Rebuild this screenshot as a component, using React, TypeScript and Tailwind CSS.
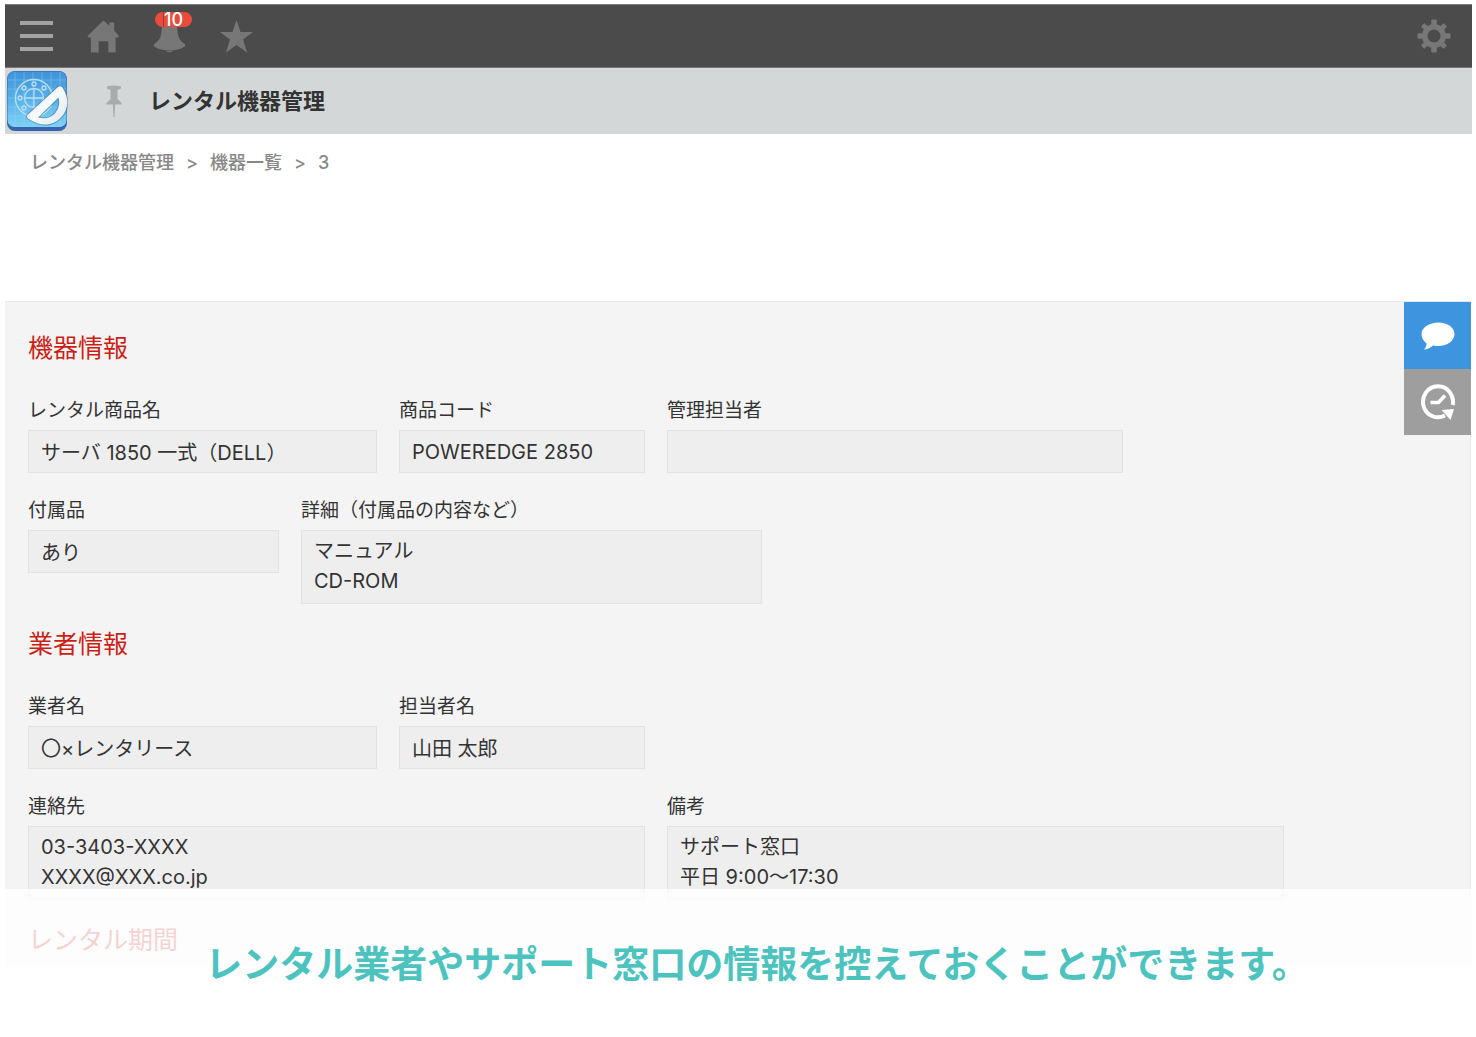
import type { ReactNode } from "react";

type FieldProps = {
  id: string;
  label: string;
  value: string;
  width: string;
  rows?: number;
};

const boxStyle =
  "block w-full border border-[#e3e3e3] bg-[#eeeeee] px-3 text-[20px] text-[#333333] outline-none";

function Field({ id, label, value, width, rows }: FieldProps) {
  return (
    <div className={`${width} shrink`}>
      <label htmlFor={id} className="mb-1 block text-[19px] leading-[30px] whitespace-nowrap text-[#333333]">
        {label}
      </label>
      {rows ? (
        <textarea id={id} rows={rows} readOnly value={value} className={`${boxStyle} resize-none overflow-hidden pt-[5px] pb-[7px] leading-[30px]`} />
      ) : (
        <input id={id} type="text" readOnly value={value} className={`${boxStyle} h-[43px]`} />
      )}
    </div>
  );
}

function Row({ children }: { children: ReactNode }) {
  return <div className="flex items-start gap-[22px]">{children}</div>;
}

function SectionTitle({ children }: { children: ReactNode }) {
  return <h2 className="text-[25px] leading-9 text-[#cc1f14]">{children}</h2>;
}

function AppIcon() {
  return (
    <svg viewBox="0 0 62 62" className="size-[62px]" aria-hidden="true">
      <defs>
        <linearGradient id="tile" x1="0" y1="0" x2="0" y2="1">
          <stop offset="0" stopColor="#3f93d8" />
          <stop offset="0.5" stopColor="#58b0e8" />
          <stop offset="1" stopColor="#7ed2f5" />
        </linearGradient>
        <linearGradient id="ruler" x1="0" y1="0" x2="1" y2="1">
          <stop offset="0" stopColor="#d3dfe8" />
          <stop offset="0.5" stopColor="#f7fbfd" />
          <stop offset="1" stopColor="#dbe6ec" />
        </linearGradient>
      </defs>
      <rect x="1" y="1" width="60" height="60" rx="8" fill="#3763ae" />
      <rect x="1.5" y="1.5" width="59" height="55.500" rx="7" fill="url(#tile)" />
      <path d="M9 2v54M18 2v54M27 2v54M36 2v54M45 2v54M54 2v54M2 10h58M2 19h58M2 28h58M2 37h58M2 46h58" stroke="#9bd5f6" strokeWidth="1" opacity="0.4" />
      <g fill="none" stroke="#b9dff7" strokeWidth="1.3">
        <circle cx="28" cy="28" r="18.500" />
        <circle cx="28" cy="28" r="9.500" />
        <path d="M28 18v20M18 28h20" />
        <circle cx="28" cy="14" r="2" />
        <circle cx="18" cy="18" r="2" />
        <circle cx="14" cy="28" r="2" />
        <circle cx="18" cy="38" r="2" />
        <circle cx="38" cy="18" r="2" />
      </g>
      <path
        d="M21.500 45 52 17q3.500-2 5 1.500c6 9 6 21-2 29-8 8-19 10-32 1.500q-3.500-2-1.500-4zM32 47.500c7 2 13 0 17-4 4-5 5-10 3.500-16z"
        fill="none"
        stroke="#3e6d97"
        strokeWidth="2"
        opacity="0.5"
      />
      <path
        d="M21.500 45 52 17q3.500-2 5 1.500c6 9 6 21-2 29-8 8-19 10-32 1.500q-3.500-2-1.500-4zM32 47.500c7 2 13 0 17-4 4-5 5-10 3.500-16z"
        fill="url(#ruler)"
        fillRule="evenodd"
      />
    </svg>
  );
}

function TopBar() {
  return (
    <header className="flex h-16 items-center justify-between border-y border-[#777777] bg-[#4b4b4b] pr-[21px] pl-[15px] text-[#777777]">
      <nav className="flex items-center gap-[33px]">
        <button type="button" aria-label="メニュー" className="flex w-[34px] flex-col gap-[9px]">
          <span className="block h-1 w-[33px] bg-[#a3a3a3]" />
          <span className="block h-1 w-[33px] bg-[#a3a3a3]" />
          <span className="block h-1 w-[33px] bg-[#a3a3a3]" />
        </button>
        <a href="#home" aria-label="ホーム">
          <svg viewBox="0 0 34 34" className="size-[33px]" fill="currentColor">
            <path d="M17 .5 23 6V2.500h5V11l5 5.500L31.500 18H29.500v15.500h-7.500V22h-10v11.500H4V18H1.500L.5 16.500z" />
          </svg>
        </a>
        <button type="button" aria-label="通知" className="relative">
          <svg viewBox="0 0 34 34" className="size-[33px]" fill="currentColor">
            <path d="M17 0c-5 1-7.500 4-8 9C8.500 17 7 21 1 25v2c4 3 10 4.300 16 4.300S29 30 33 27v-2c-6-4-7.500-8-8-16C24.500 4 22 1 17 0zM13 31h8C20 34 14 34 13 31z" />
          </svg>
          <span className="absolute -top-2 left-[2px] flex h-[15px] w-[37px] items-center justify-center rounded-full bg-[#e74c3c] font-['Inter'] text-[18px] leading-[15px] font-medium text-white">
            <span className="absolute left-2 h-full w-px bg-[#a33a30]" />
            10
          </span>
        </button>
        <a href="#favorites" aria-label="お気に入り">
          <svg viewBox="0 0 34 34" className="size-[34px]" fill="currentColor">
            <path d="M17.500 1l4 12h12.500l-10 7.500L28 33.500 17.500 26 7 33.500l4-13L1 13h12.500z" />
          </svg>
        </a>
      </nav>
      <button type="button" aria-label="設定">
        <svg viewBox="0 0 34 34" className="size-[34px]">
          <g fill="#777777">
            <rect x="14.250" y="0.500" width="5.500" height="33" rx="1" />
            <rect x="14.500" y="1" width="5" height="32" rx="1" transform="rotate(45 17 17)" />
            <rect x="14.250" y="0.500" width="5.500" height="33" rx="1" transform="rotate(90 17 17)" />
            <rect x="14.500" y="1" width="5" height="32" rx="1" transform="rotate(135 17 17)" />
            <circle cx="17" cy="17" r="12" />
          </g>
          <circle cx="17" cy="17" r="6.500" fill="#4b4b4b" />
        </svg>
      </button>
    </header>
  );
}

function TitleBar() {
  return (
    <div className="flex h-[66px] items-center bg-[#d3d7d8] pl-px">
      <AppIcon />
      <svg viewBox="0 0 16 32" className="ml-[38px] h-8 w-4" fill="#a9abac" aria-hidden="true">
        <path d="M1 1.500Q8-.5 15 1.500v2L11.500 5v9l4 4v1.500H9.200L8.500 32h-1L6.800 19.500H.5V18l4-4V5L1 3.500z" />
      </svg>
      <h1 className="ml-[27px] text-[22px] font-bold text-[#333333]">レンタル機器管理</h1>
    </div>
  );
}

function SideTabs() {
  return (
    <aside className="-mr-px flex w-[67px] shrink-0 flex-col">
      <button type="button" aria-label="コメント" className="flex h-[67px] items-center justify-center bg-[#3d95e0]">
        <svg viewBox="0 0 34 28" className="h-7 w-[34px]" fill="#ffffff">
          <path d="M17.500.5C26.500.5 33.500 5.500 33.500 12s-7 12-16 12c-2 0-3.700-.2-5.300-.6C9.500 25.800 6.500 27.300 3 27.500c1.600-1.600 2.500-3.500 2.500-6C2.500 19 .5 15.800.5 12 .5 5.500 8.500.5 17.500.5z" />
        </svg>
      </button>
      <button type="button" aria-label="変更履歴" className="flex h-[66px] items-center justify-center bg-[#9e9e9e]">
        <svg viewBox="0 0 34 36" className="h-9 w-[34px]">
          <path d="M31.700 21A15 15.500 0 1 0 24 31.500" fill="none" stroke="#ffffff" strokeWidth="4" />
          <path d="M20.500 26 33 25 29.500 36z" fill="#ffffff" />
          <path d="M9.500 18.500h8l6.500-7" fill="none" stroke="#ffffff" strokeWidth="3.500" />
        </svg>
      </button>
    </aside>
  );
}

export default function App() {
  return (
    <div className="bg-white pt-1 font-['Inter','Noto_Sans_CJK_JP',sans-serif]">
      <div className="mr-1 ml-[5px]">
        <TopBar />
        <TitleBar />
      </div>

      <nav aria-label="パンくず" className="mt-4 mb-[125px] flex gap-3 pl-[30px] text-[18px] leading-[26px] font-medium text-[#888888]">
        <a href="#app">レンタル機器管理</a>
        <span>&gt;</span>
        <a href="#list">機器一覧</a>
        <span>&gt;</span>
        <span>3</span>
      </nav>

      <main className="mr-[5px] ml-[5px] flex items-start justify-between border-t border-r border-[#e6e9ea] bg-[#f4f4f4]">
        <form className="min-w-0 flex-1 pt-7 pb-[9px] pl-[23px]">
          <section>
            <SectionTitle>機器情報</SectionTitle>
            <div className="mt-[30px] flex flex-col gap-[23px]">
              <Row>
                <Field id="product" label="レンタル商品名" value="サーバ 1850 一式（DELL）" width="w-[349px]" />
                <Field id="code" label="商品コード" value="POWEREDGE 2850" width="w-[246px]" />
                <Field id="manager" label="管理担当者" value="" width="w-[456px]" />
              </Row>
              <Row>
                <Field id="accessory" label="付属品" value="あり" width="w-[251px]" />
                <Field id="detail" label="詳細（付属品の内容など）" value={"マニュアル\nCD-ROM"} width="w-[461px]" rows={2} />
              </Row>
            </div>
          </section>

          <section className="mt-[22px]">
            <SectionTitle>業者情報</SectionTitle>
            <div className="mt-[30px] flex flex-col gap-[23px]">
              <Row>
                <Field id="vendor" label="業者名" value="〇×レンタリース" width="w-[349px]" />
                <Field id="contact" label="担当者名" value="山田 太郎" width="w-[246px]" />
              </Row>
              <Row>
                <Field id="address" label="連絡先" value={"03-3403-XXXX\nXXXX@XXX.co.jp"} width="w-[617px]" rows={2} />
                <Field id="note" label="備考" value={"サポート窓口\n平日 9:00〜17:30"} width="w-[617px]" rows={2} />
              </Row>
            </div>
          </section>

          <section className="mt-[22px]">
            <SectionTitle>レンタル期間</SectionTitle>
          </section>
        </form>
        <SideTabs />
      </main>

      {/* Caption strip laid over the end of the form */}
      <div className="relative -mt-[78px] bg-white/80 pt-[50px] pb-[46px] pl-[38px] text-center text-[37px] leading-[52px] font-bold whitespace-nowrap text-[#4cc3be]">
        レンタル業者やサポート窓口の情報を控えておくことができます。
      </div>
    </div>
  );
}
